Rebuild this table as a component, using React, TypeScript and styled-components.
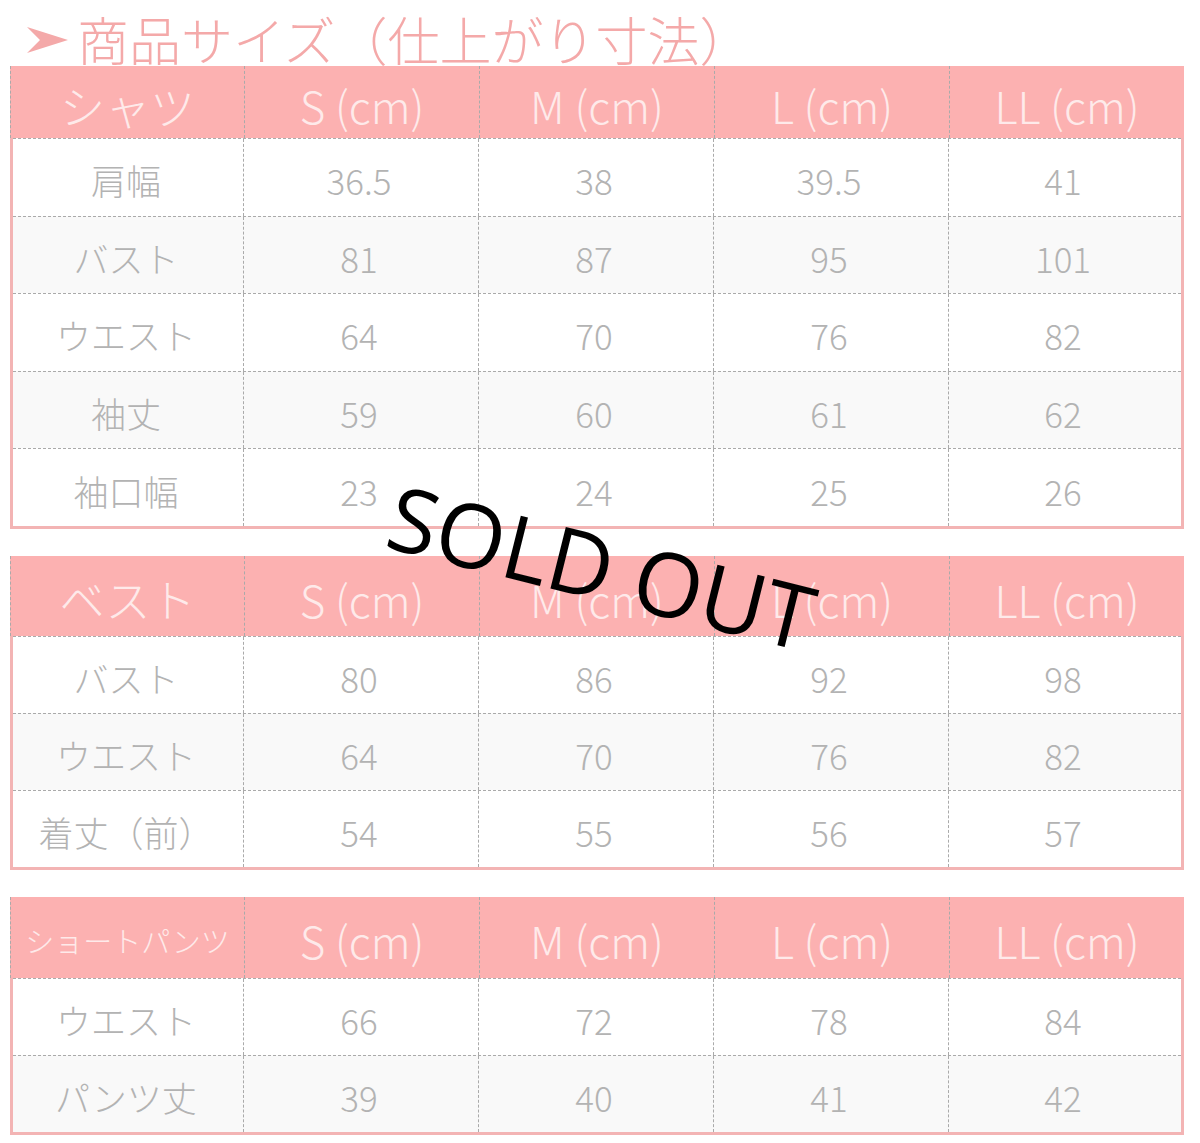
import React from "react";
import styled, { createGlobalStyle } from "styled-components";

const GlobalStyle = createGlobalStyle`
  html, body { margin: 0; padding: 0; background: #ffffff; }
  body { font-family: "Noto Sans CJK JP", "Noto Sans", sans-serif; }
  * { box-sizing: border-box; }
`;

const PINK = "#fcb1b1";
const FRAME = "#f3b4b4";
const DASH = "#aaaaaa";

const Page = styled.div`
  position: relative;
  width: 1200px;
  padding: 0 16px 0 10px;
  display: flex;
  flex-direction: column;
`;

const Title = styled.h1`
  margin: 0;
  height: 66px;
  overflow: hidden;
  display: flex;
  align-items: flex-start;
  padding: 13px 0 0 15px;
  font-family: "Noto Sans CJK JP", sans-serif;
  font-weight: 300;
  font-size: 52px;
  line-height: 1;
  color: #f4a9a9;
  white-space: nowrap;
`;

const Arrow = styled.svg`
  width: 41px;
  height: 28px;
  margin: 13px 9px 0 2px;
  flex: none;
`;

const Tables = styled.div`
  display: flex;
  flex-direction: column;
  gap: 27px;
`;

const Table = styled.section`
  display: flex;
  flex-direction: column;
`;

const HeaderRow = styled.div<{ $h: number }>`
  display: grid;
  grid-template-columns: 233px 235px 235px 235px 1fr;
  height: ${(p) => p.$h}px;
  background: ${PINK};
  border-left: 1px dashed ${DASH};
`;

const HeadCell = styled.div<{ $size?: number }>`
  display: flex;
  align-items: center;
  justify-content: center;
  padding-top: 6px;
  font-family: "Noto Sans CJK JP", sans-serif;
  font-weight: 300;
  font-size: ${(p) => p.$size ?? 44}px;
  color: #feeaea;
  white-space: nowrap;
  & + & {
    border-left: 1px dashed ${DASH};
  }
`;

const Body = styled.div`
  display: flex;
  flex-direction: column;
  border: 3px solid ${FRAME};
  border-top: none;
`;

const Row = styled.div<{ $h: number }>`
  display: grid;
  grid-template-columns: 230px 235px 235px 235px 1fr;
  height: ${(p) => p.$h}px;
  border-top: 1px dashed ${DASH};
  background: #ffffff;
  &:nth-child(even) {
    background: #f9f9f9;
  }
`;

const Cell = styled.div`
  display: flex;
  align-items: center;
  justify-content: center;
  padding: 5px 4px 0 0;
  font-family: "Noto Sans CJK JP", sans-serif;
  font-weight: 300;
  font-size: 35px;
  color: #b3b3b3;
  white-space: nowrap;
  & + & {
    border-left: 1px dashed ${DASH};
  }
`;

const SoldOut = styled.div`
  position: absolute;
  left: 602px;
  top: 566px;
  transform: translate(-50%, -50%) rotate(14deg);
  font-family: "Open Sans", "Noto Sans", sans-serif;
  font-weight: 400;
  font-size: 89px;
  line-height: 1;
  color: #000000;
  white-space: nowrap;
  pointer-events: none;
`;

type TableData = {
  name: string;
  nameSize?: number;
  headH: number;
  rowH: number;
  rows: [string, ...string[]][];
};

const sizes = ["S (cm)", "M (cm)", "L (cm)", "LL (cm)"];

const tables: TableData[] = [
  {
    name: "シャツ",
    nameSize: 45,
    headH: 72,
    rowH: 77.6,
    rows: [
      ["肩幅", "36.5", "38", "39.5", "41"],
      ["バスト", "81", "87", "95", "101"],
      ["ウエスト", "64", "70", "76", "82"],
      ["袖丈", "59", "60", "61", "62"],
      ["袖口幅", "23", "24", "25", "26"],
    ],
  },
  {
    name: "ベスト",
    nameSize: 45,
    headH: 80,
    rowH: 77,
    rows: [
      ["バスト", "80", "86", "92", "98"],
      ["ウエスト", "64", "70", "76", "82"],
      ["着丈（前）", "54", "55", "56", "57"],
    ],
  },
  {
    name: "ショートパンツ",
    nameSize: 29,
    headH: 81,
    rowH: 77,
    rows: [
      ["ウエスト", "66", "72", "78", "84"],
      ["パンツ丈", "39", "40", "41", "42"],
    ],
  },
];

export default function App() {
  return (
    <>
      <GlobalStyle />
      <Page>
        <Title>
          <Arrow viewBox="0 0 41 28">
            <path d="M0 1 Q22 8 41 14 Q22 20 0 27 L13 14 Z" fill="#f4a9a9" />
          </Arrow>
          商品サイズ（仕上がり寸法）
        </Title>
        <Tables>
          {tables.map((t) => (
            <Table key={t.name}>
              <HeaderRow $h={t.headH}>
                <HeadCell $size={t.nameSize}>{t.name}</HeadCell>
                {sizes.map((s) => (
                  <HeadCell key={s}>{s}</HeadCell>
                ))}
              </HeaderRow>
              <Body>
                {t.rows.map((r) => (
                  <Row key={r[0]} $h={t.rowH}>
                    {r.map((c, i) => (
                      <Cell key={i}>{c}</Cell>
                    ))}
                  </Row>
                ))}
              </Body>
            </Table>
          ))}
        </Tables>
        <SoldOut>SOLD OUT</SoldOut>
      </Page>
    </>
  );
}
